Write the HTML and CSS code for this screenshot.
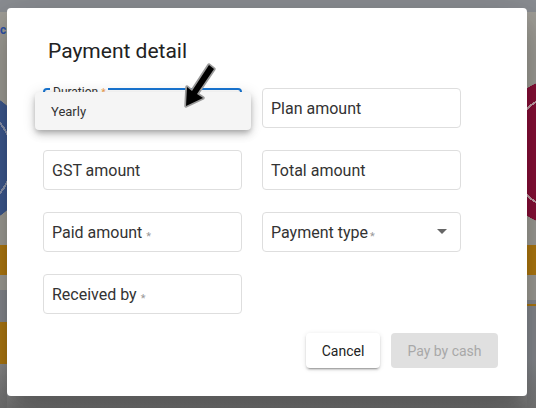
FILE: index.html
```html
<!DOCTYPE html>
<html>
<head>
<meta charset="utf-8">
<link rel="stylesheet" href="styles.css">
</head>
<body>
  <div class="strip strip-left"><span class="strip-letter">c</span></div>
  <div class="top-gap"></div>
  <div class="dialog">
    <h2 class="dialog-title">Payment detail</h2>
    <div class="form-grid">
      <div class="field field-focused">
        <span class="float-label">Duration <span class="req req-warn">*</span></span>
        <div class="menu"><div class="menu-item">Yearly</div></div>
      </div>
      <div class="field"><span class="field-text">Plan amount</span></div>
      <div class="field"><span class="field-text">GST amount</span></div>
      <div class="field"><span class="field-text">Total amount</span></div>
      <div class="field"><span class="field-text">Paid amount</span><span class="req">*</span></div>
      <div class="field field-select"><span class="field-text">Payment type</span><span class="req req-tight">*</span><span class="caret"></span></div>
      <div class="field"><span class="field-text">Received by</span><span class="req">*</span></div>
    </div>
    <div class="actions">
      <button class="btn btn-cancel">Cancel</button>
      <button class="btn btn-disabled">Pay by cash</button>
    </div>
    <svg class="cursor" width="40" height="50" viewBox="0 0 40 50">
      <polygon points="7,46 8,27 13,31 30,5 35,9 18,34 24,38" fill="#000" stroke="#9a9a9a" stroke-width="3.5" stroke-linejoin="round" paint-order="stroke"/>
    </svg>
  </div>
  <div class="bottom-gap"></div>
  <div class="strip strip-right"></div>
</body>
</html>
```
FILE: styles.css
```css
html, body {
  margin: 0;
  padding: 0;
}
body {
  width: 536px;
  height: 408px;
  overflow: hidden;
  display: grid;
  grid-template-columns: 7px 520px 1fr;
  grid-template-rows: 8px 388px 1fr;
  font-family: Roboto, "Liberation Sans", sans-serif;
  background: #8b8e93;
}
.strip {
  grid-row: 1 / 4;
  overflow: hidden;
}
.strip-left {
  grid-column: 1;
  background:
    radial-gradient(circle at -40px 158px, #3e5a92 0 52px, #8d98b0 52px 54px, #3e5a92 54px 70px, transparent 70.5px),
    linear-gradient(to bottom, #8b8e93 0 12px, #a19f98 12px 245px, #b37b10 245px 275px, #a19f98 275px 290px, #878a8f 290px 322px, #b07a12 322px 364px, #8d8d8d 364px, #707070 100%);
}
.strip-letter {
  display: block;
  margin: 22px 0 0 0;
  font-size: 12px;
  line-height: 16px;
  font-weight: 700;
  color: #2d52a8;
}
.strip-right {
  grid-column: 3;
  background:
    radial-gradient(circle at 40px 152px, #8b1038 0 58px, #c9a3ab 58px 60px, #8b1038 60px 75px, transparent 75.5px),
    linear-gradient(to bottom, #8b8e93 0 12px, #a19f98 12px 245px, #b37b10 245px 275px, #a19f98 275px 300px, #888b90 300px 304px, #b07a12 304px 306px, #888b90 306px 360px, #767676 100%);
}
.top-gap {
  grid-column: 2;
  grid-row: 1;
  background: #8b8e93;
}
.bottom-gap {
  grid-column: 2;
  grid-row: 3;
  background: linear-gradient(to bottom, #858585, #767676);
}
.dialog {
  grid-column: 2;
  grid-row: 2;
  position: relative;
  background: #fff;
  border-radius: 4px;
  box-shadow: 0 11px 15px -7px rgba(0,0,0,.2), 0 24px 38px 3px rgba(0,0,0,.14), 0 9px 46px 8px rgba(0,0,0,.12);
  padding: 26px 29px 28px 36px;
  box-sizing: border-box;
  display: flex;
  flex-direction: column;
}
.dialog-title {
  margin: 0 0 22px 5px;
  font-size: 21px;
  line-height: 32px;
  font-weight: 400;
  color: #222;
  padding-top: 1px;
  height: 31px;
}
.form-grid {
  display: grid;
  grid-template-columns: 199px 199px;
  grid-auto-rows: 40px;
  column-gap: 20px;
  row-gap: 22px;
}
.field {
  position: relative;
  border: 1px solid #dedede;
  border-radius: 4px;
  box-sizing: border-box;
  display: flex;
  align-items: center;
  padding: 2px 8px 0;
  font-size: 16px;
  color: #333;
}
.field-text {
  line-height: 20px;
}
.req {
  font-size: 11px;
  color: #999;
  margin: 6px 0 0 4px;
}
.req-tight {
  margin-left: 2px;
}
.req-warn {
  color: #f0a050;
  margin: 0;
  font-size: 10px;
}
.field-focused {
  border: 2px solid #1976d2;
}
.float-label {
  position: absolute;
  left: 5px;
  top: -5px;
  padding: 0 3px;
  background: #fff;
  font-size: 12px;
  line-height: 14px;
  color: #333;
}
.caret {
  margin-left: auto;
  margin-right: 5px;
  width: 0;
  height: 0;
  border-left: 5px solid transparent;
  border-right: 5px solid transparent;
  border-top: 5px solid #666;
  transform: translateY(-2px);
}
.menu {
  position: absolute;
  left: -10px;
  top: 2px;
  width: 216px;
  height: 38px;
  background: #f5f5f5;
  border-radius: 4px;
  box-shadow: 0 3px 5px -1px rgba(0,0,0,.2), 0 5px 8px 0 rgba(0,0,0,.14), 0 1px 14px 0 rgba(0,0,0,.12);
  display: flex;
  align-items: center;
  z-index: 2;
}
.menu-item {
  padding-left: 16px;
  font-size: 13px;
  color: #333;
}
.actions {
  margin-top: 19px;
  display: flex;
  justify-content: flex-end;
  gap: 11px;
}
.btn {
  height: 35px;
  border: none;
  border-radius: 4px;
  font-family: Roboto, "Liberation Sans", sans-serif;
  font-size: 14px;
  font-weight: 400;
  padding: 0;
}
.btn-cancel {
  width: 74px;
  background: #fff;
  color: #222;
  box-shadow: 0 3px 1px -2px rgba(0,0,0,.2), 0 2px 2px 0 rgba(0,0,0,.14), 0 1px 5px 0 rgba(0,0,0,.12);
}
.btn-disabled {
  width: 107px;
  background: #e0e0e0;
  color: #a8a8a8;
}
.cursor {
  position: absolute;
  left: 172px;
  top: 52px;
  z-index: 3;
}
```
